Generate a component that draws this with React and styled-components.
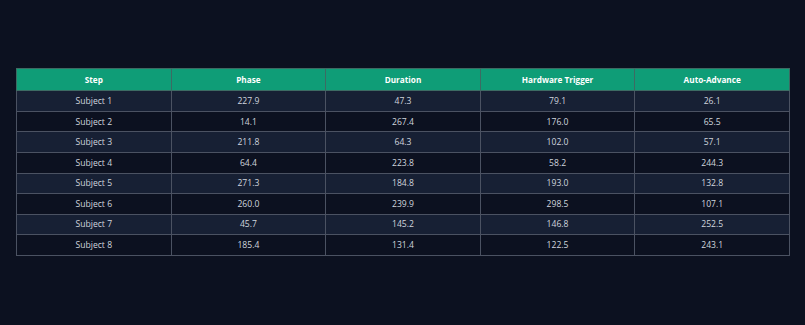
import styled, { createGlobalStyle } from "styled-components";

const GlobalStyle = createGlobalStyle`
  html, body {
    margin: 0;
    padding: 0;
    background: #0c1120;
  }
`;

const columns = ["Step", "Phase", "Duration", "Hardware Trigger", "Auto-Advance"];

const rows = [
  ["Subject 1", "227.9", "47.3", "79.1", "26.1"],
  ["Subject 2", "14.1", "267.4", "176.0", "65.5"],
  ["Subject 3", "211.8", "64.3", "102.0", "57.1"],
  ["Subject 4", "64.4", "223.8", "58.2", "244.3"],
  ["Subject 5", "271.3", "184.8", "193.0", "132.8"],
  ["Subject 6", "260.0", "239.9", "298.5", "107.1"],
  ["Subject 7", "45.7", "145.2", "146.8", "252.5"],
  ["Subject 8", "185.4", "131.4", "122.5", "243.1"],
];

export default function App() {
  return (
    <Page>
      <GlobalStyle />
      <Table>
        <thead>
          <tr>
            {columns.map((c) => (
              <Head key={c}>{c}</Head>
            ))}
          </tr>
        </thead>
        <tbody>
          {rows.map((r, i) => (
            <Row key={r[0]} $striped={i % 2 === 0}>
              {r.map((v, j) => (
                <Cell key={j}>{v}</Cell>
              ))}
            </Row>
          ))}
        </tbody>
      </Table>
    </Page>
  );
}

const Page = styled.div`
  height: 325px;
  display: flex;
  align-items: center;
  padding: 0 15px 0 16px;
  box-sizing: border-box;
  font-family: "Open Sans", "Noto Sans", sans-serif;
`;

const Table = styled.table`
  width: 100%;
  border-collapse: collapse;
  table-layout: fixed;
  margin-top: -1px;
`;

const Head = styled.th`
  background: #0f9d77;
  color: #ffffff;
  font-size: 8.2px;
  font-weight: 700;
  height: 21px;
  padding: 0;
  border: 1px solid #3d6b63;
  text-align: center;
`;

const Row = styled.tr`
  background: ${(p) => (p.$striped ? "#172034" : "#0c1120")};
`;

const Cell = styled.td`
  color: #cfd5de;
  font-size: 8.6px;
  height: 19.6px;
  padding: 0;
  border: 1px solid #4b5262;
  text-align: center;
`;
